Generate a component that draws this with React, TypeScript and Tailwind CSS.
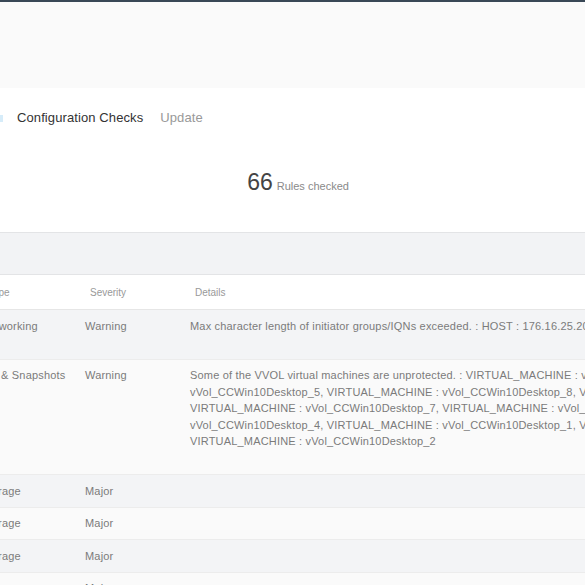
const rows = [
  {
    type: "Networking",
    severity: "Warning",
    details: "Max character length of initiator groups/IQNs exceeded. : HOST : 176.16.25.202 : iqn.1998-01.com.vmware:esx-host-02",
    extra: true,
  },
  {
    type: "VM & Snapshots",
    severity: "Warning",
    details:
      "Some of the VVOL virtual machines are unprotected. : VIRTUAL_MACHINE : vVol_CCWin10Desktop_6, VIRTUAL_MACHINE : vVol_CCWin10Desktop_5, VIRTUAL_MACHINE : vVol_CCWin10Desktop_8, VIRTUAL_MACHINE : vVol_CCWin10Desktop_3, VIRTUAL_MACHINE : vVol_CCWin10Desktop_7, VIRTUAL_MACHINE : vVol_CCWin10Desktop_9, VIRTUAL_MACHINE : vVol_CCWin10Desktop_4, VIRTUAL_MACHINE : vVol_CCWin10Desktop_1, VIRTUAL_MACHINE : vVol_CCWin10Desktop_10, VIRTUAL_MACHINE : vVol_CCWin10Desktop_2",
    extra: true,
  },
  { type: "Storage", severity: "Major", details: "", extra: false },
  { type: "Storage", severity: "Major", details: "", extra: false },
  { type: "Storage", severity: "Major", details: "", extra: false },
  { type: "Storage", severity: "Major", details: "", extra: false },
]

export default function App() {
  return (
    <div className="min-h-screen overflow-hidden bg-[#fafafa] font-['Liberation_Sans',Arial,sans-serif]">
      <div className="h-[2px] bg-[#394856]" />
      <div className="h-[86px] bg-[#fafafa]" />

      <div className="bg-white pt-[21px] pb-[37px]">
        <div className="flex items-center h-[18px] text-[13px] tracking-[0.1px]">
          <span className="w-[3px] h-[7px] bg-[#d6ecf9] mr-[14px]" />
          <span className="text-[#333]">Configuration Checks</span>
          <span className="ml-[17px] text-[#999]">Update</span>
        </div>
        <div className="mt-[42px] flex justify-center items-baseline pl-[11px]">
          <span className="text-[23px] leading-[26px] text-[#444]">66</span>
          <span className="ml-[4px] text-[11px] text-[#8a8a8a]">Rules checked</span>
        </div>
      </div>

      <div className="h-[43px] bg-[#f2f3f5] border-y border-[#e3e4e6]" />

      <div className="-ml-[27px] w-[925px]">
        <div className="grid grid-cols-[104px_105px_716px] h-[35px] items-center bg-white border-b border-[#e6e6e6] text-[10px] text-[#999]">
          <div className="pl-[15px]">Type</div>
          <div className="pl-[13px]">Severity</div>
          <div className="pl-[13px]">Details</div>
        </div>

        {rows.map((r, i) => (
          <div
            key={i}
            className={`grid grid-cols-[104px_105px_716px] text-[11px] leading-[16.5px] tracking-[0.18px] text-[#7b7b7b] border-b border-[#ececec] ${
              i % 2 === 0 ? "bg-[#f3f4f6]" : "bg-[#fafafa]"
            }`}
          >
            <div className="px-2 py-[7.5px]">{r.type}</div>
            <div className="px-2 py-[7.5px]">{r.severity}</div>
            <div className="px-2 py-[7.5px]">
              {r.details && <div>{r.details}</div>}
              {r.extra ? <div className="h-[17px]" /> : !r.details && <div className="h-[16.5px]" />}
            </div>
          </div>
        ))}
      </div>
    </div>
  )
}
